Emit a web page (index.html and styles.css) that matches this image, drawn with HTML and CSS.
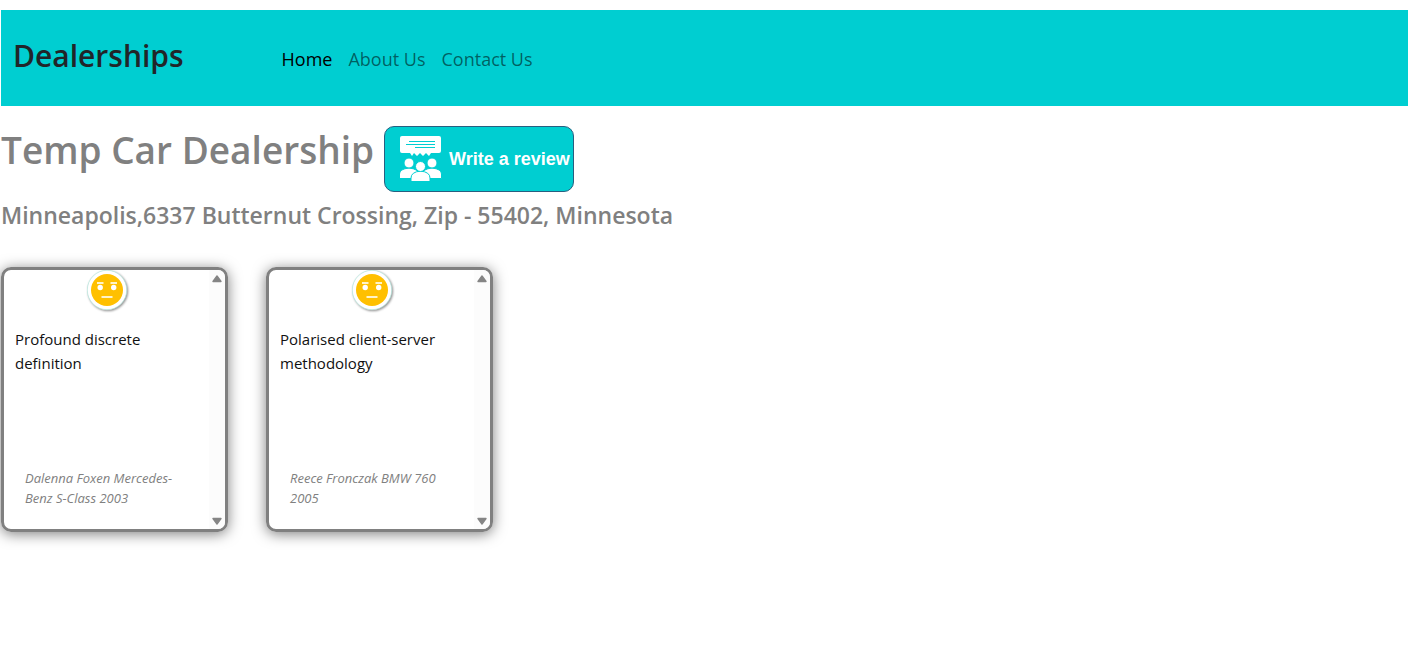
FILE: index.html
```html
<!DOCTYPE html>
<html lang="en">
<head>
<meta charset="utf-8">
<title>Dealerships</title>
<link rel="stylesheet" href="styles.css">
</head>
<body>
<svg class="symbols" aria-hidden="true">
  <symbol id="neutral" viewBox="0 0 44 44">
    <circle cx="20" cy="20" r="19.700" fill="#fff" stroke="#b5e6dc" stroke-width=".7"/>
    <circle cx="20" cy="20" r="16" fill="#ffc000"/>
    <g fill="none" stroke="#fff3c8" stroke-width="1.800">
      <path d="M10 13h6.500M23.500 13H30M14.500 27h11"/>
    </g>
    <circle cx="13.200" cy="17.500" r="2.700" fill="#fff"/>
    <circle cx="26.700" cy="17.500" r="2.700" fill="#fff"/>
  </symbol>
  <symbol id="up" viewBox="0 0 10 8"><path d="M5 1 9 6.500H1z" fill="#858585" stroke="#858585" stroke-width="1.400" stroke-linejoin="round"/></symbol>
  <symbol id="down" viewBox="0 0 10 8"><path d="M5 7 9 1.500H1z" fill="#858585" stroke="#858585" stroke-width="1.400" stroke-linejoin="round"/></symbol>
</svg>
<header class="navbar">
  <h2 class="brand">Dealerships</h2>
  <nav class="links">
    <a class="link active" href="#home">Home</a>
    <a class="link" href="#about">About Us</a>
    <a class="link" href="#contact">Contact Us</a>
  </nav>
</header>
<main class="page">
  <div class="title-row">
    <h1 class="title">Temp Car Dealership</h1>
    <button class="review-button" type="button">
      <svg class="review-icon" viewBox="0 0 42 46" aria-hidden="true">
        <path d="M2 0h37q2 0 2 2v13q0 2-2 2h-8l-2 3-3-3-3 3-3-3-3 3-3-3-2 3-2-3H2q-2 0-2-2V2q0-2 2-2z" fill="#fff"/>
        <path d="M9 5.500h26M6 8.500h29M15 11.500h20" stroke="#00ced1" stroke-width="1"/>
        <g fill="#fff" stroke="#00ced1" stroke-width="1">
          <path d="M-.500 42.500V38q0-5 9.500-6 9.500 1 9.500 6v4.500zM22.500 42.500V38q0-5 9.500-6 9.500 1 9.500 6v4.500z"/>
          <circle cx="9" cy="27" r="5"/><circle cx="32" cy="27" r="5"/>
          <path d="M11 45.500V42q0-6 9.500-7 9.500 1 9.500 7v3.500z"/>
          <circle cx="20.500" cy="30.500" r="5"/>
        </g>
      </svg>
      <span>Write a review</span>
    </button>
  </div>
  <h4 class="address">Minneapolis,6337 Butternut Crossing, Zip - 55402, Minnesota</h4>
  <section class="reviews">
    <article class="card">
      <div class="card-body">
        <svg class="face" role="img" aria-label="Neutral"><use href="#neutral"/></svg>
        <p class="review">Profound discrete definition</p>
        <p class="reviewer">Dalenna Foxen Mercedes-Benz S-Class 2003</p>
      </div>
      <div class="scroll" aria-hidden="true"><svg class="arrow"><use href="#up"/></svg><svg class="arrow"><use href="#down"/></svg></div>
    </article>
    <article class="card">
      <div class="card-body">
        <svg class="face" role="img" aria-label="Neutral"><use href="#neutral"/></svg>
        <p class="review">Polarised client-server methodology</p>
        <p class="reviewer">Reece Fronczak BMW 760 2005</p>
      </div>
      <div class="scroll" aria-hidden="true"><svg class="arrow"><use href="#up"/></svg><svg class="arrow"><use href="#down"/></svg></div>
    </article>
  </section>
</main>
</body>
</html>
```
FILE: styles.css
```css
* { box-sizing: border-box; }
body {
  margin: 0;
  padding: 10px 0 40px 1px;
  background: #fff;
  color: #212529;
  font-family: "Segoe UI", "Open Sans", "Noto Sans", sans-serif;
  font-size: 15px;
  line-height: 24px;
}
h1, h2, h4, p { margin: 0; font-weight: 600; }
.symbols { display: none; }
.navbar {
  display: flex;
  align-items: center;
  gap: 98px;
  height: 96px;
  padding: 0 12px;
  background: #00ced1;
}
.brand { font-size: 30px; line-height: 40px; padding-bottom: 4px; }
.links { display: flex; gap: 16px; font-size: 18px; padding-top: 2px; }
.link { color: rgba(0, 0, 0, .55); text-decoration: none; }
.link.active { color: #000; }
.page { padding-top: 20px; color: gray; }
.title-row { display: flex; gap: 10px; }
.title { font-size: 37px; line-height: 48px; }
.review-button {
  display: flex;
  align-items: center;
  gap: 7px;
  height: 66px;
  padding: 0 3px 0 15px;
  border: 1px solid #285f80;
  border-radius: 10px;
  background: #00ced1;
  color: #fff;
  font: bold 18px "Liberation Sans", Arial, sans-serif;
  white-space: nowrap;
}
.review-icon { width: 42px; height: 46px; }
.address { margin-top: 7px; font-size: 23px; line-height: 32px; }
.reviews { display: flex; flex-wrap: wrap; gap: 38px; padding-top: 36px; }
.card {
  display: flex;
  width: 227px;
  height: 265px;
  border: 3px solid gray;
  border-radius: 10px;
  box-shadow: 0 2px 14px rgba(0, 0, 0, .5);
  overflow: hidden;
}
.card-body { flex: 1; display: flex; flex-direction: column; color: #111; }
.face {
  width: 44px;
  height: 44px;
  margin-left: 83px;
  filter: drop-shadow(1px 1px 1px rgba(0, 0, 0, .45));
}
.review { padding: 13px 11px; font-weight: 400; }
.reviewer {
  margin-top: auto;
  padding: 0 21px;
  margin-bottom: 21px;
  font-size: 13px;
  line-height: 20px;
  font-style: italic;
  font-weight: 400;
  color: gray;
}
.scroll {
  display: flex;
  flex-direction: column;
  justify-content: space-between;
  align-items: center;
  width: 16px;
  padding: 5px 0 4px;
  background: #fcfcfc;
}
.arrow { width: 10px; height: 8px; }
```
